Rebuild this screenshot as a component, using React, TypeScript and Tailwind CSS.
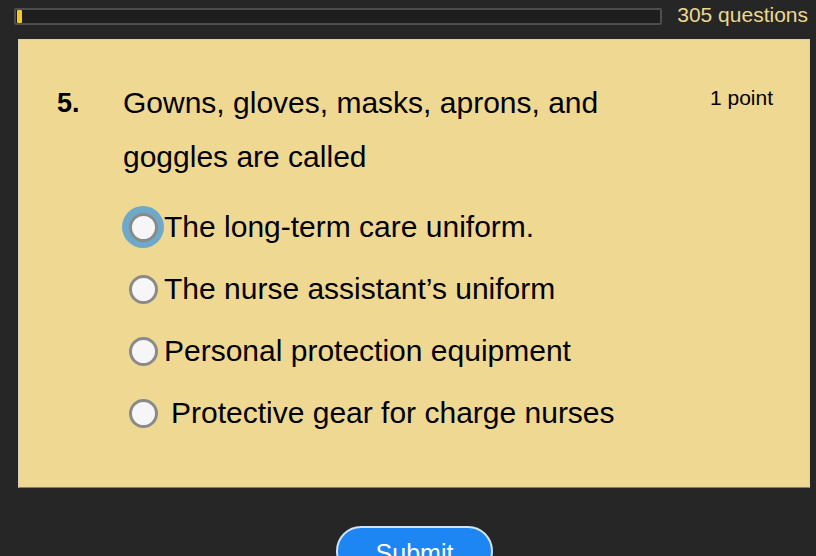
import React from "react";

const options = [
  { label: "The long-term care uniform.", focus: true, pad: false },
  { label: "The nurse assistant\u2019s uniform", focus: false, pad: false },
  { label: "Personal protection equipment", focus: false, pad: false },
  { label: "Protective gear for charge nurses", focus: false, pad: true },
];

function Radio({ focus }: { focus: boolean }) {
  return (
    <span className="relative flex h-[30px] w-[30px] shrink-0 items-center justify-center">
      {focus && (
        <span className="absolute -inset-[6px] rounded-full bg-[#6fa9c9]" />
      )}
      <span className="relative h-[29px] w-[29px] rounded-full border-[3px] border-[#8a8a88] bg-[#f6f6f8]" />
    </span>
  );
}

export default function App() {
  return (
    <div
      className="h-[556px] w-[816px] overflow-hidden bg-[#272626] text-black"
      style={{ fontFamily: '"Liberation Sans", Arial, sans-serif' }}
    >
      <div className="flex h-[40px] items-start pl-[14px] pr-[8px]">
        <div className="relative mt-[8px] h-[17px] w-[648px] rounded-[2px] border-2 border-[#4d4d4d] bg-[#1e1e1e]">
          <div className="absolute left-[1px] top-0 h-[13px] w-[5px] rounded-[1px] bg-[#f5c820]" />
        </div>
        <div className="ml-auto mt-[2px] text-[21px] leading-[26px] text-[#ecd890]">305 questions</div>
      </div>
      <div className="mx-[18px] -mt-[1px] h-[449px] w-[792px] border border-[#d8d0b8] border-b-[#8a7c68] bg-[#efd892] pt-[36px]">
        <div className="flex">
          <div className="w-[104px] pl-[38px] pt-[12px] text-[27px] font-bold leading-[30px]">5.</div>
          <div className="w-[520px] text-[30px] leading-[54px]">
            Gowns, gloves, masks, aprons, and goggles are called
          </div>
          <div className="ml-auto mr-[36px] pt-[6px] text-[21px]">1 point</div>
        </div>
        <div className="mt-[28px] flex flex-col gap-[32px] pl-[109px]">
          {options.map((o) => (
            <div key={o.label} className="flex h-[30px] items-center">
              <Radio focus={o.focus} />
              <span
                className={
                  "text-[30px] leading-[30px] " + (o.pad ? "pl-[13px]" : "pl-[6px]")
                }
              >
                {o.label}
              </span>
            </div>
          ))}
        </div>
      </div>
      <div className="mt-[38px] flex justify-center pl-[13px]">
        <button className="h-[50px] w-[157px] rounded-[26px] border-2 border-[#cfe3fa] bg-[#1d86f3] pt-[4px] text-[25px] leading-[30px] text-white">
          Submit
        </button>
      </div>
    </div>
  );
}
